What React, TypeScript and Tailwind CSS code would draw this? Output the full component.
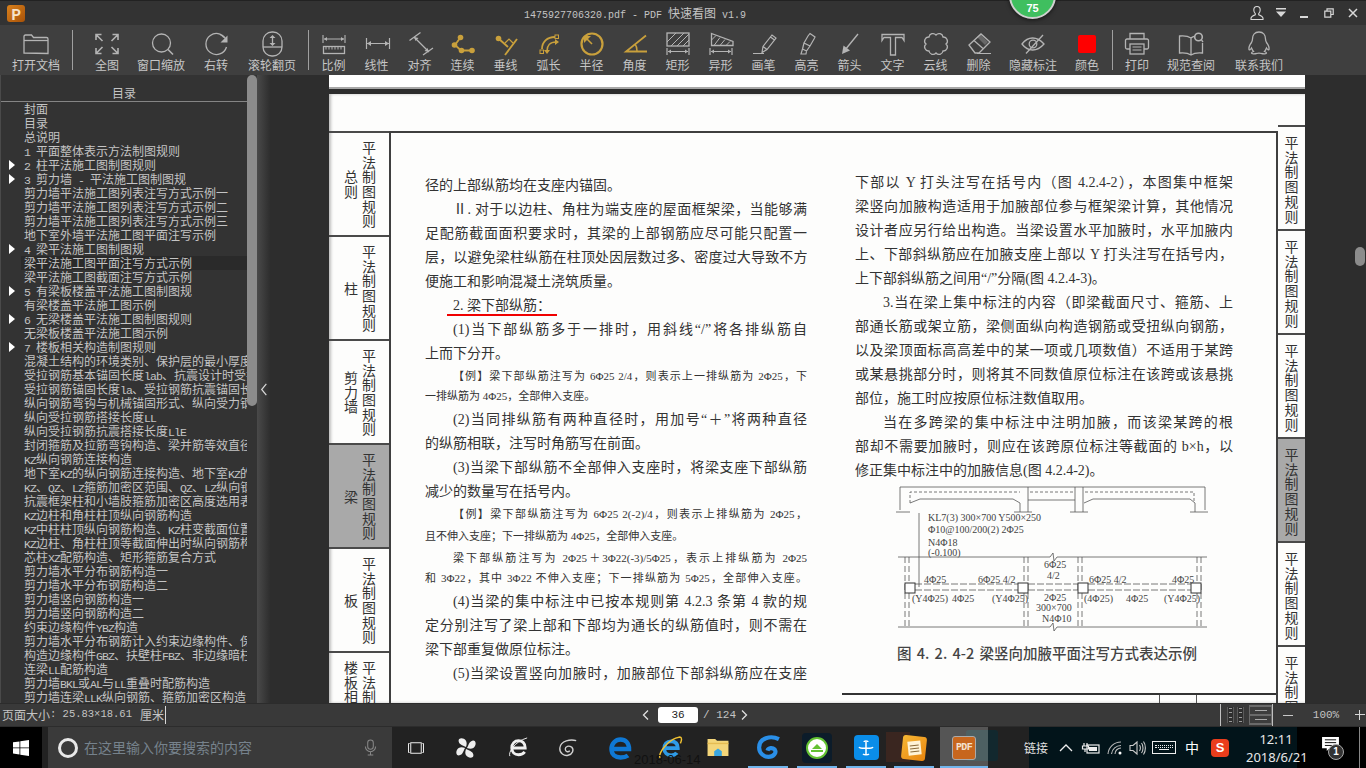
import React from "react";

const CN = "[font-family:'Noto_Sans_CJK_SC',sans-serif]";
const MONO = "[font-family:'Liberation_Mono',monospace]";

const TOC = [
  { t: "封面" }, { t: "目录" }, { t: "总说明" }, { t: "1 平面整体表示方法制图规则" },
  { t: "2 柱平法施工图制图规则", arrow: true }, { t: "3 剪力墙 - 平法施工图制图规", arrow: true },
  { t: "剪力墙平法施工图列表注写方式示例一" }, { t: "剪力墙平法施工图列表注写方式示例二" },
  { t: "剪力墙平法施工图列表注写方式示例三" }, { t: "地下室外墙平法施工图平面注写示例" },
  { t: "4 梁平法施工图制图规", arrow: true }, { t: "梁平法施工图平面注写方式示例", active: true },
  { t: "梁平法施工图截面注写方式示例" }, { t: "5 有梁板楼盖平法施工图制图规", arrow: true },
  { t: "有梁楼盖平法施工图示例" }, { t: "6 无梁楼盖平法施工图制图规则", arrow: true },
  { t: "无梁板楼盖平法施工图示例" }, { t: "7 楼板相关构造制图规则", arrow: true },
  { t: "混凝土结构的环境类别、保护层的最小厚度" }, { t: "受拉钢筋基本锚固长度lab、抗震设计时受拉" },
  { t: "受拉钢筋锚固长度la、受拉钢筋抗震锚固长度" }, { t: "纵向钢筋弯钩与机械锚固形式、纵向受力钢筋" },
  { t: "纵向受拉钢筋搭接长度LL" }, { t: "纵向受拉钢筋抗震搭接长度LlE" },
  { t: "封闭箍筋及拉筋弯钩构造、梁并筋等效直径" }, { t: "KZ纵向钢筋连接构造" },
  { t: "地下室KZ的纵向钢筋连接构造、地下室KZ的" }, { t: "KZ、QZ、LZ箍筋加密区范围、QZ、LZ纵向钢筋" },
  { t: "抗震框架柱和小墙肢箍筋加密区高度选用表" }, { t: "KZ边柱和角柱柱顶纵向钢筋构造" },
  { t: "KZ中柱柱顶纵向钢筋构造、KZ柱变截面位置" }, { t: "KZ边柱、角柱柱顶等截面伸出时纵向钢筋构造" },
  { t: "芯柱XZ配筋构造、矩形箍筋复合方式" }, { t: "剪力墙水平分布钢筋构造一" },
  { t: "剪力墙水平分布钢筋构造二" }, { t: "剪力墙竖向钢筋构造一" }, { t: "剪力墙竖向钢筋构造二" },
  { t: "约束边缘构件YBZ构造" }, { t: "剪力墙水平分布钢筋计入约束边缘构件、保" },
  { t: "构造边缘构件GBZ、扶壁柱FBZ、非边缘暗柱" }, { t: "连梁LL配筋构造" },
  { t: "剪力墙BKL或AL与LL重叠时配筋构造" }, { t: "剪力墙连梁LLK纵向钢筋、箍筋加密区构造" },
];

// small: note text with its row height, full: justified to the column, indent: first line of a paragraph
const LEFT_LINES = [
  { t: "径的上部纵筋均在支座内锚固。" },
  { t: "Ⅱ. 对于以边柱、角柱为端支座的屋面框架梁，当能够满", indent: true, full: true },
  { t: "足配筋截面面积要求时，其梁的上部钢筋应尽可能只配置一", full: true },
  { t: "层，以避免梁柱纵筋在柱顶处因层数过多、密度过大导致不方", full: true, tight: true },
  { t: "便施工和影响混凝土浇筑质量。" },
  { t: "2. 梁下部纵筋：", indent: true, red: true },
  { t: "(1)当下部纵筋多于一排时，用斜线“/”将各排纵筋自", indent: true, full: true },
  { t: "上而下分开。" },
  { t: "【例】梁下部纵筋注写为 6Φ25 2/4，则表示上一排纵筋为 2Φ25，下", indent: true, small: "h-5", full: true },
  { t: "一排纵筋为 4Φ25，全部伸入支座。", small: "h-[22px]" },
  { t: "(2)当同排纵筋有两种直径时，用加号“＋”将两种直径", indent: true, full: true },
  { t: "的纵筋相联，注写时角筋写在前面。" },
  { t: "(3)当梁下部纵筋不全部伸入支座时，将梁支座下部纵筋", indent: true, full: true },
  { t: "减少的数量写在括号内。" },
  { t: "【例】梁下部纵筋注写为 6Φ25 2(-2)/4，则表示上排纵筋为 2Φ25，", indent: true, small: "h-[22px]", full: true },
  { t: "且不伸入支座；下一排纵筋为 4Φ25，全部伸入支座。", small: "h-[22px]" },
  { t: "梁下部纵筋注写为 2Φ25＋3Φ22(-3)/5Φ25，表示上排纵筋为 2Φ25", indent: true, small: "h-5", full: true },
  { t: "和 3Φ22，其中 3Φ22 不伸入支座；下一排纵筋为 5Φ25，全部伸入支座。", small: "h-[22px]", full: true },
  { t: "(4)当梁的集中标注中已按本规则第 4.2.3 条第 4 款的规", indent: true, full: true },
  { t: "定分别注写了梁上部和下部均为通长的纵筋值时，则不需在", full: true },
  { t: "梁下部重复做原位标注。" },
  { t: "(5)当梁设置竖向加腋时，加腋部位下部斜纵筋应在支座", indent: true, full: true },
];

const RIGHT_LINES = [
  { t: "下部以 Y 打头注写在括号内（图 4.2.4-2），本图集中框架", full: true },
  { t: "梁竖向加腋构造适用于加腋部位参与框架梁计算，其他情况", full: true },
  { t: "设计者应另行给出构造。当梁设置水平加腋时，水平加腋内", full: true },
  { t: "上、下部斜纵筋应在加腋支座上部以 Y 打头注写在括号内，", full: true },
  { t: "上下部斜纵筋之间用“/”分隔(图 4.2.4-3)。" },
  { t: "3.当在梁上集中标注的内容（即梁截面尺寸、箍筋、上", indent: true, full: true },
  { t: "部通长筋或架立筋，梁侧面纵向构造钢筋或受扭纵向钢筋，", full: true },
  { t: "以及梁顶面标高高差中的某一项或几项数值）不适用于某跨", full: true },
  { t: "或某悬挑部分时，则将其不同数值原位标注在该跨或该悬挑", full: true },
  { t: "部位，施工时应按原位标注数值取用。" },
  { t: "当在多跨梁的集中标注中注明加腋，而该梁某跨的根", indent: true, full: true },
  { t: "部却不需要加腋时，则应在该跨原位标注等截面的 b×h，以", full: true },
  { t: "修正集中标注中的加腋信息(图 4.2.4-2)。" },
];

const Ico = ({ children }: { children: React.ReactNode }) => (
  <svg viewBox="0 0 30 26" className="h-[26px] w-[30px]" fill="none" stroke="currentColor" strokeWidth="1.3">
    {children}
  </svg>
);

const Dim = () => (
  <g strokeWidth="1.2">
    <path d="M4 17v7M26 17v7M5 20.5h20" />
    <path d="M5 20.5l3-2v4zM25 20.5l-3-2v4z" fill="currentColor" stroke="none" />
  </g>
);

const TOOLS_A = [
  {
    label: "全图", cls: "ml-[10px] w-12",
    icon: <path d="M4 9V3.5h5.5M4 3.5l6.5 6.5M26 9V3.5h-5.5M26 3.5l-6.5 6.5M4 17v5.5h5.5M4 22.5l6.5-6.5M26 17v5.5h-5.5M26 22.5l-6.5-6.5" strokeWidth="1.6" />,
  },
  {
    label: "窗口缩放", cls: "ml-[6px] w-12",
    icon: <><circle cx="15.5" cy="12" r="9" /><path d="M22 18.5l5 5" strokeWidth="1.6" /></>,
  },
  {
    label: "右转", cls: "ml-[7px] w-12",
    icon: <><path d="M25.5 10A10.5 10.5 0 1 0 25.5 16M19 3.5a10.5 10.5 0 0 1 4 3" /><path d="M26.5 4.5v7h-7z" fill="currentColor" stroke="none" /></>,
  },
  {
    label: "滚轮翻页", cls: "ml-[8px] w-12",
    icon: <><rect x="6" y="1" width="19" height="24" rx="9" /><path d="M6 16h19" /><path d="M15.5 6v7" /><path d="M15.5 4l3 3h-6zM15.5 15l3-3h-6z" fill="currentColor" stroke="none" /></>,
  },
];

const GOLD = "text-[#c9a03c]";

const TOOLS_B = [
  {
    label: "比例",
    icon: <><path d="M4 4v8M26 4v8M5 8h20" strokeWidth="1.1" /><path d="M5 8l3-2v4zM25 8l-3-2v4z" fill="currentColor" stroke="none" /><rect x="4.5" y="15.5" width="21" height="7" /><path d="M7 15.5v3M10 15.5v3M13 15.5v3M16 15.5v3M19 15.5v3M22 15.5v3" strokeWidth="1" /></>,
  },
  {
    label: "线性",
    icon: <><path d="M4.5 7v11M27.5 7v11M5 12.5h22" strokeWidth="1.2" /><path d="M5 12.5l4-2.5v5zM27 12.5l-4-2.5v5z" fill="currentColor" stroke="none" /></>,
  },
  {
    label: "对齐",
    icon: <><path d="M4.5 9.5l11-8M18 24l10-7M9 6l15 15" strokeWidth="1.3" /><path d="M9 6l4.5 1-3 3zM24 21l-4.5-1 3-3z" fill="currentColor" stroke="none" /></>,
  },
  {
    label: "连续", color: GOLD,
    icon: <><path d="M12.5 6.5L7 14l6 5.5h11" strokeWidth="1.8" /><g fill="currentColor" stroke="none"><circle cx="12.5" cy="6.5" r="2.8" /><circle cx="6.5" cy="14" r="2.8" /><circle cx="13.5" cy="19.5" r="2.8" /><circle cx="24" cy="19.5" r="2.8" /></g></>,
  },
  {
    label: "垂线", color: GOLD,
    icon: <><path d="M7.5 7.5l9.5 8.5M26 8L14 24" strokeWidth="1.9" /><circle cx="7.5" cy="7.5" r="2.8" fill="currentColor" stroke="none" /><path d="M14 12l4-4 4 4" strokeWidth="1.2" /></>,
  },
  {
    label: "弧长", color: GOLD,
    icon: <><path d="M8 18C8 11 13 6 21 6" strokeWidth="1.8" /><path d="M13 20c0-5 3-9 9-9" strokeWidth="1.6" /><path d="M13 23l-3-4h6zM25 11l-4-3v6z" fill="currentColor" stroke="none" /><rect x="6" y="19" width="3.5" height="3.5" strokeWidth="1" /><rect x="21" y="4" width="3.5" height="3.5" strokeWidth="1" /></>,
  },
  {
    label: "半径", color: GOLD,
    icon: <><circle cx="15" cy="13" r="10.5" strokeWidth="2.2" /><path d="M15 13L8.5 6.5" strokeWidth="1.6" /><path d="M7 5h7l-7 7z" fill="currentColor" stroke="none" /></>,
  },
  {
    label: "角度", color: GOLD,
    icon: <><path d="M26 4.5L6 20.5h21" strokeWidth="1.8" /><path d="M15 13c1.5 2 2 4.5 2 7" strokeWidth="1.5" /></>,
  },
  {
    label: "矩形",
    icon: <><rect x="4" y="2" width="22" height="13" /><path d="M4 11l9-9M8 15L21 2M14 15L26 3M20 15l6-6" strokeWidth="1" /><Dim /></>,
  },
  {
    label: "异形",
    icon: <><path d="M5.5 2.5L27 10.5v4H5.500z" /><path d="M5.500 9L10 4.500M8 14.500l6-8M14 14.500l5-6M20 14.500l4-4" strokeWidth="1" /><Dim /></>,
  },
  {
    label: "画笔",
    icon: <path d="M13 21.500l1-6L23 4l4 3-9 11.500zM14 15.500l4 3M21.500 6l4 3M4 22.500h11" strokeWidth="1.2" />,
  },
  {
    label: "高亮",
    icon: <path d="M18 2.500l5 3.500-1 2-4 7-6-3 4-7zM12 12l-1.500 6 4 2 3.500-5M10.500 18l-1.500 5h5l.500-3" strokeWidth="1.2" />,
  },
  {
    label: "箭头",
    icon: <><path d="M23 3L10 19" strokeWidth="1.3" /><path d="M7 23l1.500-8.500 6.500 5z" fill="currentColor" stroke="none" /></>,
  },
  {
    label: "文字",
    icon: <path d="M4 3.500h22v6l-2-3h-6.500v17.500h-5V6.500H6l-2 3z" />,
  },
  {
    label: "云线",
    icon: <path d="M8 6a4 4 0 0 1 7-2 4 4 0 0 1 7 2 4 4 0 0 1 3 7 4 4 0 0 1-3 7 4 4 0 0 1-7 2 4 4 0 0 1-7-2 4 4 0 0 1-3-7 4 4 0 0 1 3-7z" />,
  },
  {
    label: "删除",
    icon: <><path d="M5 14L17 3l9 8-11 11H11z" /><path d="M10 9.500l9 8M13 22.500h14" strokeWidth="1.2" /><path d="M13 6l3-3 8 8-3 3z" fill="currentColor" opacity=".35" stroke="none" /></>,
  },
];

const TOOLS_C = [
  {
    label: "隐藏标注", cls: "ml-[9px] w-12",
    icon: <><path d="M4 13c6-8 15-8 22 0-7 8-16 8-22 0z" /><circle cx="15" cy="13" r="3.800" /><path d="M8 22.500L25 4" strokeWidth="1.3" /></>,
  },
  {
    label: "颜色", cls: "ml-[6px] w-12",
    icon: <rect x="6" y="4" width="18" height="18" rx="2" fill="#ff0000" stroke="none" />,
  },
];

const TOOLS_D = [
  {
    label: "打印", cls: "w-12",
    icon: <><path d="M8 8V2.500h14V8M8 18H5a1.500 1.500 0 0 1-1.500-1.500V9.500A1.500 1.500 0 0 1 5 8h20a1.500 1.500 0 0 1 1.500 1.500v7A1.500 1.500 0 0 1 25 18h-3" /><rect x="8" y="13" width="14" height="10" /><path d="M10.500 16h9M10.500 19h9" strokeWidth="1" /></>,
  },
  {
    label: "规范查阅", cls: "ml-[6px] w-12",
    icon: <><path d="M15 7C12 5 8 4.500 3.500 5v17c4.500-.5 8.500 0 11.500 2 3-2 7-2.500 11.500-2V12M15 7v17M15 7c1-.8 2-1.300 3-1.700" /><circle cx="22.500" cy="6" r="3.800" strokeWidth="1.600" /><path d="M25.500 9l1.500 2" /></>,
  },
  {
    label: "联系我们", cls: "ml-[20px] w-12",
    icon: <path d="M15 1c-4.500 0-6.500 3.500-6.500 7 0 1.500-.5 2.500-1 3.500-1.500 2-3 4.500-2.500 7 .3 1 1.500 0 2.500-1.500.5 1.500 1 2.500 2 3.500-1.500.5-2 1-2 1.500 0 1 3 1 5 .5.8-.3 1.500-.3 2.500-.3s1.700 0 2.500.3c2 .5 5 .5 5-.5 0-.5-.5-1-2-1.500 1-1 1.500-2 2-3.500 1 1.500 2.200 2.500 2.500 1.500.5-2.500-1-5-2.500-7-.5-1-1-2-1-3.500 0-3.500-2-7-6.500-7z" />,
  },
];

type Tool = { label: string; icon: React.ReactNode; cls?: string; color?: string };

function ToolBtn({ label, icon, cls = "w-[43px]", color = "text-[#b4b4b4]" }: Tool) {
  return (
    <div className={`flex h-full shrink-0 flex-col items-center pt-[6px] ${cls} ${color}`}>
      <Ico>{icon}</Ico>
      <span className="whitespace-nowrap text-[12px] leading-4 text-[#c6c6c6]">{label}</span>
    </div>
  );
}

const Sep = ({ cls = "" }: { cls?: string }) => <div className={`h-10 w-px shrink-0 bg-[#a0a0a0] ${cls}`} />;

function TitleBar() {
  return (
    <div className="relative flex h-[25px] shrink-0 items-center border-t border-[#222] bg-[#333333]">
      <div className={`ml-[7px] flex h-[17px] w-[18px] items-center justify-center rounded-[3px] bg-gradient-to-br from-[#d9811c] to-[#a85208] text-[15px] font-bold leading-none text-[#f6e3c8] ${CN}`}>
        P
      </div>
      <div className={`ml-[499px] whitespace-nowrap text-[10px] text-[#c4c4c4] ${MONO}`}>
        1475927706320.pdf - PDF <span className={`text-[12px] ${CN}`}>快速看图</span> v1.9
      </div>
      <div className="ml-auto mr-[8px] flex items-center text-[#d8d8d8]">
        <svg viewBox="0 0 16 16" className="h-4 w-4" fill="none" stroke="currentColor" strokeWidth="1.1">
          <path d="M8 1.500c-2.200 0-3.200 1.800-3.200 3.600 0 1.500.7 2.800 1.500 3.500v1.200c-2 .8-4 1.600-4.300 3.200v1.500h12v-1.500c-.3-1.600-2.300-2.400-4.300-3.200V8.600c.8-.7 1.500-2 1.500-3.500 0-1.800-1-3.600-3.200-3.600z" />
        </svg>
        <svg viewBox="0 0 12 12" className="ml-[10px] h-3 w-3" fill="currentColor">
          <path d="M1 1h10v1.600H1zM1 4.500h10L6 10z" />
        </svg>
        <div className="ml-[13px] mt-[7px] h-[2px] w-[8px] bg-current" />
        <svg viewBox="0 0 10 10" className="ml-[16px] h-[10px] w-[10px]" fill="none" stroke="currentColor" strokeWidth="1.200">
          <path d="M3 3V.800h6.200V6.500H7M.8 3.200h6v6h-6z" />
        </svg>
        <svg viewBox="0 0 10 10" className="ml-[14px] h-[10px] w-[10px]" fill="none" stroke="currentColor" strokeWidth="1.500">
          <path d="M1 1l8 8M9 1l-8 8" />
        </svg>
      </div>
      {/* update badge hanging off the top edge */}
      <div className="absolute left-[1009px] top-[-30px] flex h-[48px] w-[47px] items-end justify-center rounded-full border-2 border-[#d0d0d0] bg-[#3fbf5f] pb-[2px] shadow-[0_1px_4px_rgba(0,0,0,.6)]">
        <span className="text-[11px] font-bold leading-[14px] text-white [font-family:'Liberation_Sans',sans-serif]">75</span>
      </div>
    </div>
  );
}

function Toolbar() {
  return (
    <div className="flex h-[50px] shrink-0 items-center bg-[#3f3f3f]">
      <ToolBtn
        label="打开文档"
        cls="w-[72px]"
        icon={<><path d="M3 22V5.500q0-1.500 1.500-1.500h6l2 2.500h13q1.500 0 1.500 1.500v14.500z" /><path d="M3 9.500h24" /></>}
      />
      <Sep />
      {TOOLS_A.map((t) => <ToolBtn key={t.label} {...t} />)}
      <Sep cls="ml-[12px] mr-[3px]" />
      {TOOLS_B.map((t) => <ToolBtn key={t.label} {...t} />)}
      {TOOLS_C.map((t) => <ToolBtn key={t.label} {...t} />)}
      <Sep cls="ml-px" />
      {TOOLS_D.map((t) => <ToolBtn key={t.label} {...t} />)}
    </div>
  );
}

// latin runs in the outline are half-width, 6px a character
function TocText({ t }: { t: string }) {
  return (
    <>
      {t.split(/([A-Za-z0-9 -]+)/).map((part, i) =>
        i % 2 ? <span key={i} className={`whitespace-pre text-[11.5px] tracking-[-0.9px] ${MONO}`}>{part}</span> : part,
      )}
    </>
  );
}

function Sidebar() {
  return (
    <aside className="flex h-full w-[247px] shrink-0 flex-col overflow-hidden border-l border-[#4a4a4a] bg-[#333333]">
      <div className="flex h-[27px] shrink-0 items-end justify-center border-b border-[#858585] pb-px text-[12px] leading-[14px] text-[#c4c4c4]">
        目录
      </div>
      <div className="min-h-0 flex-1 overflow-hidden">
        {TOC.map((row) => (
          <div
            key={row.t}
            className={`relative ml-[20px] h-[14px] whitespace-nowrap pl-[3px] text-[12px] leading-[14px] text-[#c4c4c4] ${row.active ? "bg-[#2a2a2a]" : ""}`}
          >
            {row.arrow && <span className="absolute left-[-12px] top-[2px] h-0 w-0 border-y-[5px] border-l-[6px] border-y-transparent border-l-white" />}
            <TocText t={row.t} />
          </div>
        ))}
      </div>
    </aside>
  );
}

function PageLine({ t, indent, full, small, red, tight }: { t: string; indent?: boolean; full?: boolean; small?: string; red?: boolean; tight?: boolean }) {
  return (
    <div
      className={`relative overflow-hidden ${small ? `${small} text-[11px] leading-5` : "h-6 text-[14px] leading-6"} ${indent ? "pl-7" : ""} ${full ? "[text-align-last:justify] text-justify" : ""} ${tight ? "tracking-[-0.5px]" : ""}`}
    >
      {t}
      {red && <span className="absolute left-[22px] top-[20px] h-[2px] w-[110px] bg-[#f00000]" />}
    </div>
  );
}

function VChars({ text, cls = "" }: { text: string; cls?: string }) {
  return (
    <div className={`flex w-[14px] flex-col text-[14px] leading-[14.7px] ${cls}`}>
      {Array.from(text).map((c, i) => <span key={i} className="block text-center">{c}</span>)}
    </div>
  );
}

const LEFT_TABS = ["总则", "柱", "剪力墙", "梁", "板", "楼板相关构造"];

function BeamFigure() {
  const T = ({ x, y, c }: { x: number; y: number; c: string }) => (
    <text x={x} y={y} fontSize="10" fill="#444" stroke="none" fontFamily="'Liberation Serif',serif">{c}</text>
  );
  return (
    <svg viewBox="880 483 340 160" className="ml-[25px] h-[160px] w-[340px]" fill="none" stroke="#555" strokeWidth="0.8">
      {/* elevation */}
      <path d="M900 487H1205M900 487V510M1205 487V510M1020 503V512M1028 487V512M1075 487V512M1083 487V512" />
      <path d="M910 503l10-4h93l7 4M1028 500h47M1084 503l9-4h97l5 4M1195 503v9" />
      <path d="M910 503V492H1020M1030 492H1073M1085 492H1194V503" strokeDasharray="3 2" />
      <path d="M896 512H910M1014 512H1032M1070 512H1088M1190 512H1208" />
      {/* leader and plan */}
      <path d="M919 513V587" />
      <path d="M898 557H1050l3-4 1 8 3-4H1207M898 627H1050l3-4 1 8 3-4H1207" />
      <path d="M905 557V627M1024 557V627M1028 557V627M1078 557V627M1082 557V627M1197 557V627M1201 557V627M909 557V627" strokeDasharray="6 3" />
      <path d="M915 584H1018M915 590H1018M1028 584H1078M1028 590H1078M1088 584H1191M1088 590H1191" strokeDasharray="7 2" />
      <g fill="#fff" stroke="#333" strokeWidth="1">
        <rect x="905" y="583" width="10" height="10" />
        <rect x="1018" y="583" width="10" height="10" />
        <rect x="1078" y="583" width="10" height="10" />
        <rect x="1191" y="583" width="10" height="10" />
      </g>
      <T x={928} y={521} c="KL7(3) 300×700 Y500×250" />
      <T x={928} y={533} c="Φ10@100/200(2) 2Φ25" />
      <T x={928} y={546} c="N4Φ18" />
      <T x={928} y={556} c="(-0.100)" />
      <T x={924} y={583} c="4Φ25" />
      <T x={978} y={583} c="6Φ25 4/2" />
      <T x={1044} y={568} c="6Φ25" />
      <T x={1047} y={579} c="4/2" />
      <T x={1089} y={583} c="6Φ25 4/2" />
      <T x={1172} y={583} c="4Φ25" />
      <T x={912} y={602} c="(Y4Φ25)" />
      <T x={952} y={602} c="4Φ25" />
      <T x={992} y={602} c="(Y4Φ25)" />
      <T x={1044} y={601} c="2Φ25" />
      <T x={1036} y={611} c="300×700" />
      <T x={1042} y={622} c="N4Φ10" />
      <T x={1084} y={602} c="(4Φ25)" />
      <T x={1126} y={602} c="4Φ25" />
      <T x={1164} y={602} c="(Y4Φ25)" />
    </svg>
  );
}

function Page() {
  return (
    <div className="flex h-[609px] w-[976px] overflow-hidden bg-[#fdfdfc] text-[#333] shadow-[inset_2px_0_3px_rgba(0,0,0,.25)]">
      {/* chapter tabs, left */}
      <div className="w-[60px] shrink-0 pt-[37px]">
        {LEFT_TABS.map((tab) => (
          <div key={tab} className={`flex h-[104px] items-center border-t-2 border-[#4a4a4a] pl-[15px] ${tab === "梁" ? "bg-[#a9a9a9]" : ""}`}>
            <VChars text={tab} />
            <VChars text="平法制图规则" cls="ml-[4px]" />
          </div>
        ))}
      </div>

      {/* framed body */}
      <div className="mt-[37px] flex w-[889px] shrink-0 border-x-2 border-t-2 border-[#3f3f3f] [font-family:'Liberation_Serif','Noto_Sans_CJK_SC',serif]">
        <div className="ml-[34px] w-[382px] shrink-0 pt-[41px]">
          {LEFT_LINES.map((l) => <PageLine key={l.t} {...l} />)}
        </div>
        <div className="ml-[48px] w-[378px] shrink-0 pt-[38px]">
          {RIGHT_LINES.map((l) => <PageLine key={l.t} {...l} />)}
          <BeamFigure />
          <div className={`ml-[42px] h-5 whitespace-nowrap text-[14.5px] font-medium leading-5 text-[#444] [word-spacing:2px] ${CN}`}>
            图 4. 2. 4-2 梁竖向加腋平面注写方式表达示例
          </div>
          <div className="ml-[-13px] mt-[30px] flex h-4 w-[434px] border-t-2 border-[#333]">
            <div className="ml-[317px] w-[38px] border-x border-[#555]" />
          </div>
        </div>
      </div>

      {/* chapter tabs, right */}
      <div className="flex-1 pt-[31px]">
        {[0, 1, 2, 3, 4, 5].map((i) => (
          <div key={i} className={`flex h-[104px] justify-center border-t-2 border-[#4a4a4a] pt-[8px] ${i === 3 ? "bg-[#a9a9a9]" : ""}`}>
            <VChars text="平法制图规则" />
          </div>
        ))}
      </div>
    </div>
  );
}

function Viewer() {
  return (
    <div className="flex h-full min-w-0 flex-1">
      <div className="w-[10px] shrink-0 bg-[#333333]">
        <div className="h-[331px] w-full rounded-[5px] bg-[#8c8c8c]" />
      </div>
      <div className="flex w-[13px] shrink-0 items-center justify-center bg-gradient-to-r from-[#4a4a4a] to-[#2e2e2e]">
        <svg viewBox="0 0 8 14" className="h-[13px] w-[8px]" fill="none" stroke="#d8d8d8" strokeWidth="1.300">
          <path d="M6.500 1L1.500 7l5 6" />
        </svg>
      </div>
      <div className="w-[59px] shrink-0" />
      <div className="w-[976px] shrink-0">
        <div className="h-[14px] border-b-2 border-[#a8a8a8] bg-white" />
        <div className="mt-[5px]"><Page /></div>
      </div>
      <div className="w-[50px] shrink-0" />
      <div className="w-[10px] shrink-0 pt-[172px]">
        <div className="h-[19px] w-full rounded-[5px] bg-[#8c8c8c]" />
      </div>
    </div>
  );
}

function StatusBar() {
  return (
    <div className="flex h-6 shrink-0 items-center border-y border-[#2c2c2c] bg-[#393939] text-[#c4c4c4]">
      <div className="flex h-full w-[640px] shrink-0 items-center whitespace-pre pl-[2px] text-[12px]">
        页面大小<span className={`text-[10.5px] ${MONO}`}>: 25.83×18.61</span><span className="ml-2">厘米</span>
        <span className="ml-px h-[18px] w-px bg-[#d8d8d8]" />
      </div>
      <svg viewBox="0 0 12 12" className="h-3 w-3" fill="none" stroke="#e0e0e0" strokeWidth="1.300"><path d="M8 1.500L3.500 6 8 10.500" /></svg>
      <div className={`ml-[6px] flex h-4 w-10 items-center justify-center rounded-[3px] bg-white text-[11px] text-[#222] ${MONO}`}>36</div>
      <div className={`ml-[5px] w-[35px] whitespace-nowrap text-[11px] ${MONO}`}>/ 124</div>
      <svg viewBox="0 0 12 12" className="h-3 w-3" fill="none" stroke="#e0e0e0" strokeWidth="1.300"><path d="M4 1.500L8.500 6 4 10.500" /></svg>
      <div className="ml-[470px] h-[22px] w-px bg-[#c0c0c0]" />
      <div className="flex w-[28px] justify-center gap-[3px]">
        {[0, 1].map((i) => (
          <div key={i} className="flex h-[16px] w-[7px] flex-col justify-between border-x border-[#5a5a5a] bg-[#2e2e2e] p-px">
            {[0, 1, 2, 3].map((k) => <span key={k} className="h-px w-full bg-[#9a9a9a]" />)}
          </div>
        ))}
      </div>
      <div className="flex h-[20px] w-[23px] flex-col justify-between bg-[#6a6a6a] px-px py-[2px]">
        {[0, 1].map((i) => (
          <div key={i} className="flex h-[7px] items-center justify-center bg-[#3d3d3d]"><span className="h-px w-[12px] bg-[#aaa]" /></div>
        ))}
      </div>
      <div className="h-[22px] w-px bg-[#c0c0c0]" />
      <div className="ml-[10px] h-px w-[10px] bg-[#c8c8c8]" />
      <div className={`ml-[16px] w-[34px] text-center text-[11px] ${MONO}`}>100%</div>
      <div className="relative ml-[12px] h-[10px] w-[10px]">
        <span className="absolute left-0 top-[4px] h-px w-full bg-[#d8d8d8]" />
        <span className="absolute left-[4px] top-0 h-full w-px bg-[#d8d8d8]" />
      </div>
    </div>
  );
}

const Under = () => <span className="absolute bottom-0 left-1 h-[2px] w-10 bg-[#71b5ec]" />;

function Taskbar() {
  return (
    <div className="relative flex h-[41px] shrink-0 items-stretch bg-[#222222]">
      <div className="flex w-[42px] items-center justify-center bg-black">
        <svg viewBox="0 0 16 16" className="h-4 w-4" fill="#fff"><path d="M0 2.300L6.500 1.400V7.500H0zM7.300 1.300L16 0V7.500H7.300zM0 8.300H6.500V14.500L0 13.600zM7.300 8.300H16V16L7.300 14.700z" /></svg>
      </div>
      <div className="ml-[6px] flex w-[344px] items-center bg-[#3a3a3a]">
        <span className="ml-[10px] h-5 w-5 rounded-full border-[3px] border-[#e8e8e8]" />
        <span className="ml-[6px] text-[14px] text-[#76828c]">在这里输入你要搜索的内容</span>
        <svg viewBox="0 0 14 18" className="ml-[112px] h-[17px] w-[13px]" fill="none" stroke="#888" strokeWidth="1.100"><rect x="4" y="1" width="6" height="10" rx="3" /><path d="M1.500 8a5.500 5.500 0 0 0 11 0M7 13.500V17M4 17h6" /></svg>
      </div>

      <div className="flex w-12 items-center justify-center">
        <svg viewBox="0 0 22 16" className="h-[12px] w-5" fill="none" stroke="#f0f0f0" strokeWidth="1.300"><rect x="4" y="1" width="14" height="14" /><path d="M2.500 2H1v12h1.500M19.500 2H21v12h-1.500" /></svg>
      </div>

      {/* ghost of the desktop behind the translucent taskbar */}
      <span className="absolute left-[634px] top-[25px] text-[13px] leading-[16px] text-[#111] [font-family:'Liberation_Sans',sans-serif]">2018-06-14</span>

      <div className="ml-[2px] flex w-12 items-center justify-center">
        <svg viewBox="0 0 24 24" className="h-[22px] w-[22px]" fill="#eee"><path d="M12 11C9 9 5 9 4 5s5-5 8-1c1 2 1 4 0 7zM13 12c2-3 2-7 6-8s5 5 1 8c-2 1-4 1-7 0zM12 13c3 2 7 2 8 6s-5 5-8 1c-1-2-1-4 0-7zM11 12c-2 3-2 7-6 8s-5-5-1-8c2-1 4-1 7 0z" /></svg>
      </div>
      <div className="ml-[4px] flex w-12 items-center justify-center">
        <svg viewBox="0 0 24 24" className="h-[23px] w-[23px]" fill="none" stroke="#f0f0f0" strokeWidth="3"><path d="M5 12.500h14c0-5-3-7.500-7-7.500s-7 3-7 7.500 3 7 7 7c3 0 5-1 6.500-3" /><path d="M3 21C1 18 7 6 21 2" strokeWidth="1" /></svg>
      </div>
      <div className="ml-[2px] flex w-12 items-center justify-center">
        <svg viewBox="0 0 22 22" className="h-5 w-5" fill="none" stroke="#cfcfcf" strokeWidth="1.500"><path d="M20 3C14 1 3 3 2 11c-.5 6 5 9 9 8 5-1 7-6 4-9-3-2-7-1-7 2s3 4 5 2" /></svg>
      </div>
      <div className="ml-[4px] flex w-12 items-center justify-center">
        <svg viewBox="0 0 24 24" className="h-[24px] w-[24px]" fill="none" stroke="#0f78d4" strokeWidth="4.500"><path d="M3.500 13H21c0-6-3.500-9.500-8.500-9.500S3.500 7.500 3.500 13s4 8.500 9 8.500c3 0 5.500-.5 7.500-2" /></svg>
      </div>
      <div className="ml-[2px] flex w-12 items-center justify-center">
        <svg viewBox="0 0 24 24" className="h-[25px] w-[25px]" fill="none"><path d="M6 12.500h13c0-4.500-2.500-6.500-6.500-6.500S6 9 6 13s3 6.500 6.500 6.500c2.500 0 4.500-1 5.500-2.500" stroke="#2f9be6" strokeWidth="3.600" /><path d="M2 22C0 18 9 4 21 2c2 0 2 3 .5 6" stroke="#f1c232" strokeWidth="1.400" /></svg>
      </div>
      <div className="flex w-12 items-center justify-center">
        <svg viewBox="0 0 22 20" className="h-[19px] w-[22px]"><path d="M0 1h8l2 2h12v16H0z" fill="#f4d67a" /><path d="M0 5h22v1.500H0z" fill="#e6bc52" /><path d="M7 19v-5l4-3 4 3v5z" fill="#3aa6e0" /></svg>
      </div>
      <div className="relative ml-[2px] flex w-12 items-center justify-center">
        <svg viewBox="0 0 24 24" className="h-[25px] w-[25px]" fill="none" stroke="#2a8fe8" strokeWidth="4"><path d="M22 4C14 0 3 3 3 12c0 6 5 9 9 9 5 0 8-4 6-7-2-2-6-2-7 1" /></svg>
        <Under />
      </div>
      <div className="relative ml-px flex w-12 items-center justify-center">
        <div className="flex h-[30px] w-[30px] items-center justify-center rounded bg-[#0c1c2a]">
          <div className="flex h-[22px] w-[22px] flex-col items-center justify-center rounded-full border-2 border-[#63c232] bg-white">
            <span className="h-0 w-0 border-x-[5px] border-b-[5px] border-x-transparent border-b-[#63c232]" />
            <span className="mt-px h-[2px] w-3 bg-[#63c232]" />
          </div>
        </div>
        <Under />
      </div>
      <div className="relative ml-px flex w-12 items-center justify-center">
        <div className="flex h-[25px] w-[25px] items-center justify-center rounded-[4px] bg-[#0a8de8]">
          <svg viewBox="0 0 18 18" className="h-[18px] w-[18px]" fill="none" stroke="#fff" strokeWidth="1.500"><path d="M9 3v12M2 8c1 2 3 1 7 1s6 1 7-1M6 15c1 1 5 1 6 0M7 3c0-1.500 4-1.500 4 0" /></svg>
        </div>
        <Under />
      </div>
      <div className="relative flex w-12 items-center justify-center">
        <span className="absolute left-[-4px] top-[5px] h-[30px] w-[24px] bg-[#3a2620]" />
        <div className="relative flex h-[24px] w-[24px] rotate-6 items-center justify-center rounded-[3px] bg-gradient-to-br from-[#f7b733] to-[#e8850c]">
          <div className="flex h-[14px] w-[13px] -rotate-12 flex-col justify-center gap-[2px] bg-[#fff3d6] px-[2px]">
            <span className="h-px bg-[#8a6a3a]" /><span className="h-px bg-[#8a6a3a]" /><span className="h-px bg-[#8a6a3a]" />
          </div>
        </div>
        <Under />
      </div>
      <div className="relative ml-[2px] flex w-12 items-center justify-center bg-[#555555]">
        <span className="absolute left-[26px] top-[3px] h-[31px] w-[32px] rounded-[3px] bg-[linear-gradient(90deg,#4d6062_22px,#12282e_22px)]" />
        <div className={`relative flex h-[24px] w-[24px] items-center justify-center rounded-[3px] border border-[#aaa] bg-[#c7661d] text-[10px] font-bold tracking-[-0.6px] text-[#f3e1cf] ${MONO}`}>
          PDF
        </div>
        <span className="absolute bottom-0 left-0 h-[2px] w-full bg-[#71b5ec]" />
      </div>

      {/* tray */}
      <div className="flex min-w-0 flex-1 items-center bg-[linear-gradient(90deg,#222222_41px,#02141a_41px,#02141a_309px,#000000_309px)] pl-9 text-[#e2e2e2]">
        <span className="w-6 whitespace-nowrap text-[12px]">链接</span>
        <svg viewBox="0 0 16 10" className="ml-[10px] h-[10px] w-4" fill="none" stroke="#eee" strokeWidth="1.300"><path d="M2 8l6-6 6 6" /></svg>
        <svg viewBox="0 0 20 12" className="ml-[6px] h-3 w-5" fill="none" stroke="#eee" strokeWidth="1.200"><path d="M4 1v3M7 1v3M2.500 4h6v3h-6zM5 7v3" /><rect x="7" y="3" width="12" height="8" /><rect x="9" y="5" width="8" height="4" fill="#eee" stroke="none" /></svg>
        <svg viewBox="0 0 18 14" className="ml-[7px] h-[14px] w-[18px]" fill="none" stroke="#bbb" strokeWidth="1.100"><path d="M1 13A13 13 0 0 1 14 1M4.500 13A9.500 9.500 0 0 1 14 4.500M8 13a6 6 0 0 1 6-6" /><circle cx="13" cy="12" r="1.500" fill="#fff" stroke="none" /></svg>
        <svg viewBox="0 0 18 16" className="ml-[3px] h-4 w-[18px]" fill="none" stroke="#ccc" strokeWidth="1.100"><path d="M2 5.500h3L9 2v12l-4-3.500H2zM11.500 5c1.200 1.500 1.200 4.500 0 6M13.500 3c2 2.500 2 7.500 0 10M15.500 1.500c2.500 3.500 2.500 9.500 0 13" /></svg>
        <div className="ml-[6px] flex h-[13px] w-6 flex-col justify-center gap-px border border-[#eee] px-[2px]">
          <span className="h-px border-t border-dotted border-[#eee]" />
          <span className="h-px border-t border-dotted border-[#eee]" />
          <span className="mx-1 h-px bg-[#eee]" />
        </div>
        <span className="ml-2 w-4 text-center text-[14px] text-white">中</span>
        <div className="ml-[11px] flex h-[18px] w-[18px] items-center justify-center rounded-[4px] bg-[#ea3d1c] text-[13px] font-bold text-white [font-family:'Liberation_Sans',sans-serif]">S</div>
        <div className="ml-[17px] w-[60px] shrink-0 text-center text-[13px] leading-[18px] text-[#e8e8e8] [font-family:'Noto_Sans',sans-serif]">
          <div>12:11</div>
          <div>2018/6/21</div>
        </div>
        <div className="relative ml-[15px] h-6 w-6">
          <svg viewBox="0 0 18 16" className="ml-px mt-px h-[15px] w-[17px]" fill="#fff"><path d="M0 0h18v12H8l-3 3v-3H0z" /><path d="M3 3h12M3 6h12M3 9h8" stroke="#000" /></svg>
          <span className="absolute left-[7px] top-[8px] flex h-4 w-4 items-center justify-center rounded-full border border-[#aaa] bg-[#333] text-[10px] font-bold text-white [font-family:'Liberation_Sans',sans-serif]">1</span>
        </div>
        <div className="ml-[14px] h-full w-px bg-[#888]" />
      </div>
    </div>
  );
}

export default function App() {
  return (
    <div className={`flex h-[768px] w-[1366px] flex-col overflow-hidden bg-[#2d2d2d] ${CN}`}>
      <TitleBar />
      <Toolbar />
      <div className="flex h-[628px] shrink-0">
        <Sidebar />
        <Viewer />
      </div>
      <StatusBar />
      <Taskbar />
    </div>
  );
}
